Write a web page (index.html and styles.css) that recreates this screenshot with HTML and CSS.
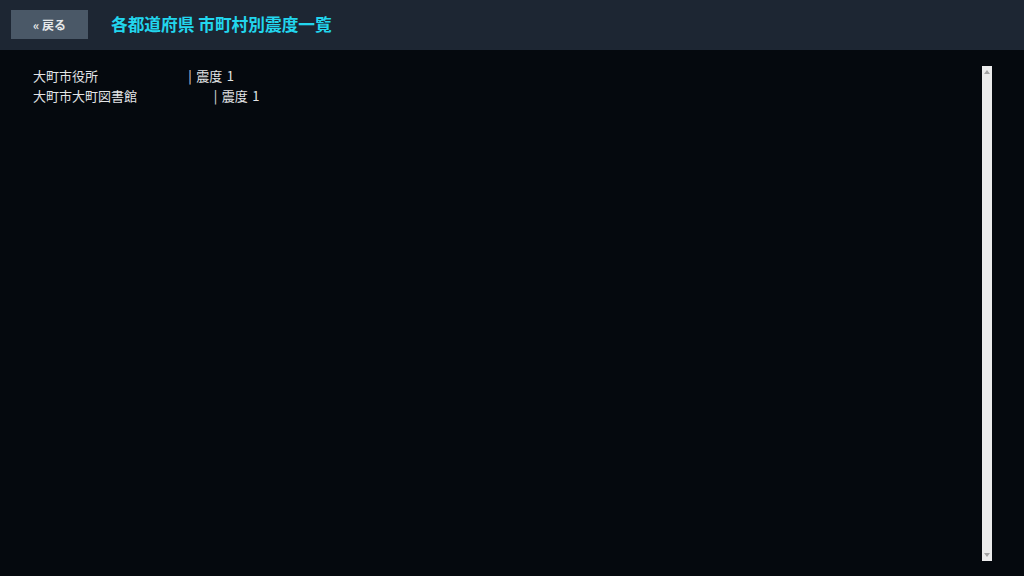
FILE: index.html
```html
<!DOCTYPE html>
<html lang="ja">
<head>
<meta charset="utf-8">
<link rel="stylesheet" href="styles.css">
</head>
<body>
<header class="topbar">
  <button class="back">« 戻る</button>
  <h1 class="title">各都道府県 市町村別震度一覧</h1>
</header>
<main class="content">
  <div class="list">
    <pre class="rows">大町市役所                    | 震度 1
大町市大町図書館                 | 震度 1</pre>
  </div>
  <div class="scrollbar">
    <div class="arrow up"></div>
    <div class="track"></div>
    <div class="arrow down"></div>
  </div>
</main>
</body>
</html>
```
FILE: styles.css
```css
html, body {
  margin: 0;
  padding: 0;
  height: 100%;
}
body {
  background: #05090e;
  font-family: "Noto Sans CJK JP", "Noto Sans", sans-serif;
  color: #e2e4e6;
  display: flex;
  flex-direction: column;
  overflow: hidden;
}
.topbar {
  height: 50px;
  background: #1d2633;
  display: flex;
  align-items: center;
  padding-left: 11px;
  box-sizing: border-box;
  flex: none;
}
.back {
  width: 77px;
  height: 29px;
  margin-top: -2px;
  background: #4a5867;
  border: none;
  color: #e6e8ea;
  font-family: "Noto Sans CJK JP", sans-serif;
  font-size: 12px;
  font-weight: bold;
  padding: 0;
  line-height: 29px;
}
.title {
  margin: -3px 0 0 23px;
  font-size: 16.7px;
  font-weight: bold;
  color: #22d6ee;
  line-height: 22px;
}
.content {
  flex: 1;
  display: flex;
  padding: 16px 32px 15px 33px;
  box-sizing: border-box;
  min-height: 0;
}
.list {
  flex: 1;
}
.rows {
  margin: 0;
  font-family: "Noto Sans CJK JP", sans-serif;
  font-size: 13px;
  line-height: 20px;
  color: #e2e4e6;
  word-spacing: 1.6px;
}
.scrollbar {
  width: 10px;
  background: #ececec;
  display: flex;
  flex-direction: column;
  align-items: center;
  flex: none;
}
.track {
  flex: 1;
}
.arrow {
  width: 0;
  height: 0;
  border-left: 3px solid transparent;
  border-right: 3px solid transparent;
  margin: 4px 0;
}
.arrow.up {
  border-bottom: 4px solid #a3a3a3;
}
.arrow.down {
  border-top: 4px solid #a3a3a3;
}
```
